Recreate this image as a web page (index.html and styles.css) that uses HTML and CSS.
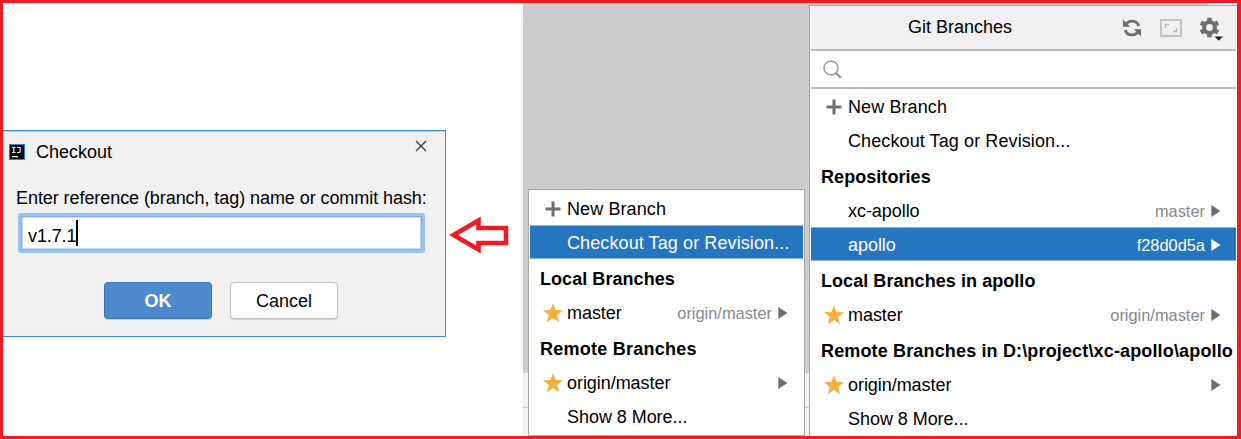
FILE: index.html
```
<!DOCTYPE html>
<html lang="en">
<head>
<meta charset="utf-8">
<title>Git Branches</title>
<link rel="stylesheet" href="styles.css">
</head>
<body>
<svg class="defs" width="0" height="0">
  <symbol id="star" viewBox="0 0 20 20"><path fill="#f4af3d" d="M10 .2l2.500 6.900 7.500.2-5.900 4.600 2.100 7.400-6.200-4.300-6.200 4.300 2.100-7.400L0 7.300l7.500-.2z"/></symbol>
  <symbol id="plus" viewBox="0 0 16 16"><path fill="#6e6e6e" d="M6.500.5h3v6h6v3h-6v6h-3v-6h-6v-3h6z"/></symbol>
  <symbol id="tri" viewBox="0 0 10 12"><path fill="currentColor" d="M.3 0L9.500 6 .3 12z"/></symbol>
</svg>
<div class="page">
  <section class="left">
    <div class="dialog">
      <div class="titlebar">
        <svg class="logo" width="16" height="16" viewBox="0 0 16 16"><rect width="16" height="16" fill="#2f7fdc"/><rect x="1" y="1" width="14" height="14" fill="#080808"/><path d="M3 3.500h3.600M4.800 3.500v5M3 8.500h3.600M8 3.500h3.200v3.600q0 1.400-1.400 1.400H8M3 12.700h6" fill="none" stroke="#e8e8e8" stroke-width="1.200"/></svg>
        <span class="title">Checkout</span>
        <svg class="close" width="12" height="12" viewBox="0 0 12 12"><path d="M1 1l10 10M11 1L1 11" stroke="#333" stroke-width="1.200"/></svg>
      </div>
      <div class="prompt">Enter reference (branch, tag) name or commit hash:</div>
      <div class="field"><span>v1.7.1</span><i class="caret"></i></div>
      <div class="buttons">
        <div class="btn primary">OK</div>
        <div class="btn">Cancel</div>
      </div>
    </div>
    <svg class="arrow" width="60" height="36" viewBox="0 0 60 36"><path d="M4.500 18L29.500 3.500v7.500H57v15H29.500V32.500z" fill="#fff" stroke="#ed1c24" stroke-width="4.600"/></svg>
  </section>
  <section class="middle">
    <div class="popup small">
      <div class="row"><span class="icon"><svg width="16" height="16"><use href="#plus"/></svg></span><span class="name wide">New Branch</span></div>
      <div class="row selected"><span class="icon"></span><span class="name wide">Checkout Tag or Revision...</span></div>
      <div class="heading">Local Branches</div>
      <div class="row"><span class="icon"><svg width="20" height="20"><use href="#star"/></svg></span><span class="name">master</span><span class="hint">origin/master</span><svg class="tri" width="10" height="12"><use href="#tri"/></svg></div>
      <div class="heading remote">Remote Branches</div>
      <div class="row"><span class="icon"><svg width="20" height="20"><use href="#star"/></svg></span><span class="name">origin/master</span><svg class="tri" width="10" height="12"><use href="#tri"/></svg></div>
      <div class="row"><span class="icon"></span><span class="name">Show 8 More...</span></div>
    </div>
  </section>
  <section class="right">
    <div class="popup large">
      <div class="header">
        <span class="caption">Git Branches</span>
        <svg width="20" height="20" viewBox="0 0 20 20"><path d="M3.500 7.800A7 7 0 0 1 16.800 8M16.500 12.200A7 7 0 0 1 3.200 12" fill="none" stroke="#6e6e6e" stroke-width="2.800"/><path d="M1 1.500v7.300h7.300zM19 18.500v-7.300h-7.300z" fill="#6e6e6e"/></svg>
        <svg width="22" height="18" viewBox="0 0 22 18"><path d="M1 1h20v16H1z" fill="none" stroke="#c3c3c3" stroke-width="2"/><path d="M5.500 9V5.500H9M13 12.500h3.500V9" fill="none" stroke="#b8b8b8" stroke-width="1.500"/></svg>
        <svg class="gear" width="23" height="25" viewBox="0 0 23 25"><circle cx="9.500" cy="10.500" r="5.400" fill="none" stroke="#6e6e6e" stroke-width="4"/><g stroke="#6e6e6e" stroke-width="4.600"><path d="M9.500.7v4M9.500 16.300v4M1 5.600l3.500 2M14.500 13.400l3.500 2M18 5.600l-3.500 2M4.500 13.400l-3.500 2"/></g><path d="M14.500 19.500h8.500l-4.250 4.300z" fill="#222"/></svg>
      </div>
      <div class="search"><svg width="19" height="19" viewBox="0 0 19 19"><circle cx="8" cy="8" r="7" fill="none" stroke="#9aa3aa" stroke-width="1.600"/><path d="M12.800 12.800l5 5" stroke="#8d979e" stroke-width="2.200"/></svg></div>
      <div class="row"><span class="icon"><svg width="16" height="16"><use href="#plus"/></svg></span><span class="name wide">New Branch</span></div>
      <div class="row"><span class="icon"></span><span class="name wide">Checkout Tag or Revision...</span></div>
      <div class="heading">Repositories</div>
      <div class="row"><span class="icon"></span><span class="name">xc-apollo</span><span class="hint">master</span><svg class="tri" width="10" height="12"><use href="#tri"/></svg></div>
      <div class="row selected"><span class="icon"></span><span class="name">apollo</span><span class="hint">f28d0d5a</span><svg class="tri" width="10" height="12"><use href="#tri"/></svg></div>
      <div class="heading">Local Branches in apollo</div>
      <div class="row"><span class="icon"><svg width="20" height="20"><use href="#star"/></svg></span><span class="name">master</span><span class="hint">origin/master</span><svg class="tri" width="10" height="12"><use href="#tri"/></svg></div>
      <div class="heading path">Remote Branches in D:\project\xc-apollo\apollo</div>
      <div class="row"><span class="icon"><svg width="20" height="20"><use href="#star"/></svg></span><span class="name">origin/master</span><svg class="tri" width="10" height="12"><use href="#tri"/></svg></div>
      <div class="row"><span class="icon"></span><span class="name">Show 8 More...</span></div>
    </div>
  </section>
</div>
</body>
</html>
```
FILE: styles.css
```
* { box-sizing: border-box; }
body { margin: 0; background: #fff; color: #000; font: 18px/20px "Liberation Sans", Arial, sans-serif; }
svg { display: block; flex: none; }
.defs { display: none; }
.page { display: flex; width: 1241px; height: 439px; border: 3px solid #ed1c24; border-right-width: 4px; overflow: hidden; }
.left { display: flex; width: 520px; flex: none; align-items: flex-start; }
.dialog { width: 443px; height: 207px; margin-top: 127px; background: #f1f1f1; border: 1px solid #3a8ed8; border-left: 0; box-shadow: inset 0 1px #a9d3f5; }
.titlebar { display: flex; align-items: center; height: 42px; padding: 0 18px 0 6px; }
.title { margin-left: 11px; flex: 1; }
.close { margin-bottom: 13px; }
.prompt { margin: 15px 0 0 13px; white-space: nowrap; letter-spacing: -.07px; }
.field { display: flex; align-items: center; width: 407px; height: 40px; margin: 5px 0 0 15px; padding: 5px 0 0 7px; background: #fff; border: 3px solid #97c3f3; border-radius: 3px; box-shadow: inset 0 0 0 1px #85afe0, inset 0 0 0 2px #c9dcf3; }
.field span { letter-spacing: -.1px; }
.caret { width: 2px; height: 26px; margin-top: -6px; background: #000; }
.buttons { display: flex; gap: 18px; margin: 29px 0 0 101px; }
.btn { width: 108px; height: 37px; border: 1px solid #c3c3c3; border-radius: 4px; background: #fff; line-height: 36px; text-align: center; box-shadow: 0 1px 1px #ccc; }
.primary { border-color: #3c74b5; background: #4d8acb; color: #fff; font-weight: bold; }
.arrow { margin: 214px 0 0 3px; }
.middle { width: 286px; flex: none; padding: 186px 0 0 5px; background: linear-gradient(#ccc 370px, #f2f2f2 370px 404px, #ccc 404px 405px, #f2f2f2 405px); }
.popup { background: #fff; border: 1px solid #a9a9a9; white-space: nowrap; }
.small { width: 277px; height: 247px; padding: 1px 1px 0; }
.right { width: 428px; flex: none; padding-top: 2px; background: linear-gradient(90deg, #ccc 399px, #fff 399px); }
.large { width: 428px; height: 431px; border-bottom: 0; border-right: 0; padding: 0 1px; }
.row { display: flex; align-items: center; height: 34px; padding: 1px 15px 0 0; }
.icon { display: flex; justify-content: center; width: 20px; margin: 0 4px 0 13px; flex: none; }
.name { flex: 1; letter-spacing: -.05px; }
.wide { letter-spacing: .1px; }
.hint { margin-right: 6px; color: #888; font-size: 16.400px; }
.tri { color: #6e6e6e; }
.selected { background: #2675bf; color: #fff; box-shadow: inset 0 1px #8ab4dd, inset 0 -1px #8ab4dd; }
.selected .hint, .selected .tri { color: #fff; }
.heading { height: 36px; padding: 10px 0 0 10px; font-weight: bold; letter-spacing: .06px; }
.remote { letter-spacing: .24px; }
.path { letter-spacing: .15px; }
.header { display: flex; align-items: center; height: 45px; padding-right: 13px; background: #f1f1f1; border-bottom: 2px solid #bcbcbc; }
.caption { flex: 1; padding: 0 0 2px 97px; }
.header svg + svg { margin-left: 18px; }
.gear { margin-top: 3px; }
.search { display: flex; align-items: center; height: 38px; padding-left: 12px; border-bottom: 2px solid #bcbcbc; }
```
